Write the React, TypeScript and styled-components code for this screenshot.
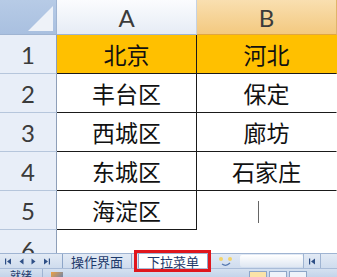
import { Fragment } from "react";
import styled, { createGlobalStyle } from "styled-components";

const GlobalStyle = createGlobalStyle`
  html, body { margin: 0; padding: 0; background: #ffffff; }
  body { font-family: "Lato", "Noto Sans CJK SC", sans-serif; }
`;

const Screen = styled.div`
  width: 337px;
  height: 277px;
  overflow: hidden;
  display: flex;
  flex-direction: column;
  background: #ffffff;
`;

const Sheet = styled.div`
  height: 253px;
  flex: none;
  overflow: hidden;
  display: grid;
  grid-template-columns: 57px 140px 1fr;
  grid-template-rows: 35px repeat(6, 39px);
`;

const Corner = styled.div`
  position: relative;
  background: linear-gradient(#b7cbe6, #a9c0e0);
  border-right: 1px solid #9fb4d2;
  border-bottom: 1px solid #9fb4d2;
  box-sizing: border-box;
  &::after {
    content: "";
    position: absolute;
    right: 3px;
    bottom: 3px;
    width: 0;
    height: 0;
    border-left: 25px solid transparent;
    border-bottom: 25px solid #eef2f8;
  }
`;

const ColHead = styled.div<{ $active?: boolean }>`
  display: flex;
  align-items: center;
  justify-content: center;
  font-family: "Lato", sans-serif;
  font-size: 24px;
  color: #3b3b3b;
  box-sizing: border-box;
  border-right: 1px solid ${(p) => (p.$active ? "#e0b46a" : "#c5d2e3")};
  border-bottom: 1px solid ${(p) => (p.$active ? "#e0a640" : "#9fb4d2")};
  background: ${(p) =>
    p.$active
      ? "linear-gradient(#f9dfb0, #f3c980)"
      : "linear-gradient(#fbfcfe, #e6ecf5)"};
`;

const RowHead = styled.div`
  display: flex;
  align-items: center;
  justify-content: center;
  font-family: "Lato", sans-serif;
  font-size: 24px;
  color: #3b3b3b;
  background: #e8eef8;
  box-sizing: border-box;
  border-right: 1px solid #8e9fb8;
  border-bottom: 1px solid #b6c6dc;
`;

const Cell = styled.div<{ $fill?: string; $right?: boolean; $bottom?: boolean }>`
  display: flex;
  align-items: center;
  justify-content: center;
  font-family: "Noto Sans CJK SC", sans-serif;
  font-size: 23px;
  color: #111111;
  background: ${(p) => p.$fill || "#ffffff"};
  box-sizing: border-box;
  border-right: 1px solid ${(p) => (p.$right ? "#1a1a1a" : "transparent")};
  border-bottom: 1px solid ${(p) => (p.$bottom ? "#1a1a1a" : "transparent")};
`;

const Caret = styled.span`
  width: 1px;
  height: 22px;
  background: #666666;
  margin-left: -17px;
  margin-top: 4px;
`;

const TabBar = styled.div`
  height: 15px;
  flex: none;
  display: flex;
  align-items: stretch;
  background: linear-gradient(#e2eaf5, #cfdcee);
  border-top: 1px solid #9fb4d2;
  box-sizing: border-box;
`;

const NavButtons = styled.div`
  width: 62px;
  display: flex;
  align-items: center;
  gap: 7px;
  padding-left: 5px;
  box-sizing: border-box;
`;

const Tab = styled.div<{ $active?: boolean }>`
  position: relative;
  display: flex;
  align-items: center;
  padding: 0 8px;
  margin-left: ${(p) => (p.$active ? "6px" : "0")};
  font-family: "Noto Sans CJK SC", sans-serif;
  font-size: 13px;
  line-height: 1;
  color: #1d3a6b;
  background: ${(p) => (p.$active ? "#ffffff" : "transparent")};
  border-left: 1px solid #8ea6c8;
  border-right: 1px solid #8ea6c8;
  ${(p) =>
    p.$active &&
    `
    &::after {
      content: "";
      position: absolute;
      left: -5px;
      right: -4px;
      top: -4px;
      bottom: -4px;
      border: 3px solid #e0161c;
    }
  `}
`;

const NewSheet = styled.div`
  width: 26px;
  display: flex;
  align-items: center;
  justify-content: center;
  margin-left: 6px;
`;

const ScrollTrack = styled.div`
  flex: 1;
  margin: 1px 0;
  background: linear-gradient(#ffffff, #dfe7f2);
  border-radius: 2px;
`;

const ScrollButton = styled.div`
  width: 16px;
  display: flex;
  align-items: center;
  justify-content: center;
  border-left: 1px solid #9fb4d2;
`;

const StatusBar = styled.div`
  flex: 1;
  display: flex;
  align-items: flex-start;
  background: linear-gradient(#d5e1f0, #c4d4ea);
  border-top: 1px solid #a9bcd8;
  box-sizing: border-box;
  overflow: hidden;
`;

const StatusText = styled.div`
  padding: 0 10px;
  font-family: "Noto Sans CJK SC", sans-serif;
  font-size: 11px;
  line-height: 12px;
  color: #1d3a6b;
  border-right: 1px solid #9fb4d2;
  height: 100%;
`;

const StatusIcon = styled.div`
  margin: 3px 0 0 8px;
  width: 12px;
  height: 10px;
  background: linear-gradient(135deg, #f0a040, #4f7fc8);
`;

const ViewButtons = styled.div`
  margin-left: auto;
  margin-right: 30px;
  display: flex;
  gap: 2px;
  padding-top: 2px;
`;

const ViewButton = styled.div<{ $on?: boolean }>`
  width: 16px;
  height: 10px;
  border: 1px solid #8ea6c8;
  background: ${(p) => (p.$on ? "#fbe3a8" : "#eef3fa")};
`;

const NAV = "#2e4f86";

const FirstIcon = () => (
  <svg width="7" height="7" viewBox="0 0 7 7">
    <rect x="0" y="0.5" width="1.2" height="6" fill={NAV} />
    <path d="M6 0.5 L2 3.5 L6 6.5 Z" fill={NAV} />
  </svg>
);
const PrevIcon = () => (
  <svg width="5" height="7" viewBox="0 0 5 7">
    <path d="M4.5 0.5 L0.5 3.5 L4.5 6.5 Z" fill={NAV} />
  </svg>
);
const NextIcon = () => (
  <svg width="5" height="7" viewBox="0 0 5 7">
    <path d="M0.5 0.5 L4.5 3.5 L0.5 6.5 Z" fill={NAV} />
  </svg>
);
const LastIcon = () => (
  <svg width="7" height="7" viewBox="0 0 7 7">
    <path d="M1 0.5 L5 3.5 L1 6.5 Z" fill={NAV} />
    <rect x="5.8" y="0.5" width="1.2" height="6" fill={NAV} />
  </svg>
);

const rows: { n: number; a: string; b: string }[] = [
  { n: 2, a: "丰台区", b: "保定" },
  { n: 3, a: "西城区", b: "廊坊" },
  { n: 4, a: "东城区", b: "石家庄" },
];

export default function App() {
  return (
    <>
      <GlobalStyle />
      <Screen>
        <Sheet>
          <Corner />
          <ColHead>A</ColHead>
          <ColHead $active>B</ColHead>

          <RowHead>1</RowHead>
          <Cell $fill="#ffc000" $right $bottom>北京</Cell>
          <Cell $fill="#ffc000" $bottom>河北</Cell>

          {rows.map((r) => (
            <Fragment key={r.n}>
              <RowHead>{r.n}</RowHead>
              <Cell $right $bottom>{r.a}</Cell>
              <Cell $bottom>{r.b}</Cell>
            </Fragment>
          ))}

          <RowHead>5</RowHead>
          <Cell $right $bottom>海淀区</Cell>
          <Cell><Caret /></Cell>

          <RowHead>6</RowHead>
          <Cell />
          <Cell />
        </Sheet>

        <TabBar>
          <NavButtons>
            <FirstIcon />
            <PrevIcon />
            <NextIcon />
            <LastIcon />
          </NavButtons>
          <Tab>操作界面</Tab>
          <Tab $active>下拉菜单</Tab>
          <NewSheet>
            <svg width="20" height="12" viewBox="0 0 20 12">
              <circle cx="4" cy="4" r="2" fill="#f3d36a" />
              <circle cx="13" cy="4" r="2" fill="#f3d36a" />
              <path d="M5 9 Q9 12 13 8" stroke="#5578b0" strokeWidth="1.2" fill="none" />
            </svg>
          </NewSheet>
          <ScrollTrack />
          <ScrollButton>
            <FirstIcon />
          </ScrollButton>
          <ScrollButton />
        </TabBar>

        <StatusBar>
          <StatusText>就绪</StatusText>
          <StatusIcon />
          <ViewButtons>
            <ViewButton $on />
            <ViewButton />
            <ViewButton />
          </ViewButtons>
        </StatusBar>
      </Screen>
    </>
  );
}
